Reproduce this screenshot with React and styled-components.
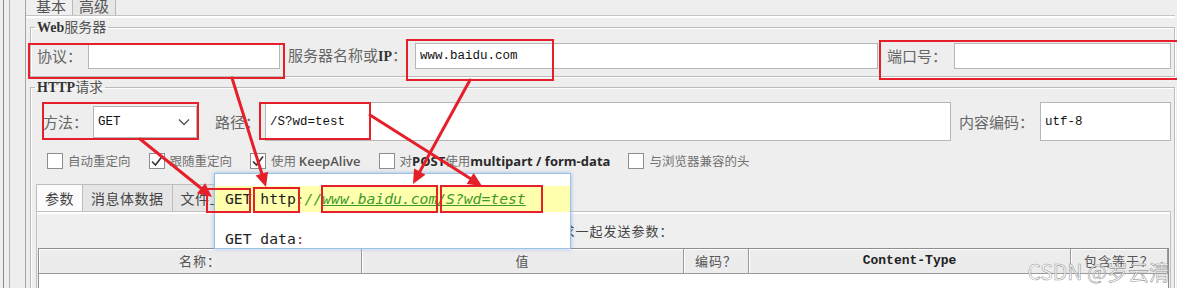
import React from "react";
import styled, { createGlobalStyle } from "styled-components";

const CJK = `"Noto Sans CJK SC", "Noto Sans", sans-serif`;
const MONO = `"Liberation Mono", "DejaVu Sans Mono", monospace`;
const CODE = `"DejaVu Sans Mono", "Liberation Mono", monospace`;
const SERIF = `"Liberation Serif", "DejaVu Serif", serif`;
const RED = "#e5202a";

const GlobalStyle = createGlobalStyle`
  html, body { margin: 0; padding: 0; background: #eeeeee; }
  body { font-family: ${CJK}; }
  *, *::before, *::after { box-sizing: border-box; }
`;

const Frame = styled.div`
  position: relative;
  width: 1177px;
  height: 288px;
  overflow: hidden;
  background: #eeeeee;
  display: flex;
`;

const Gutter = styled.div`
  flex: none;
  width: 26px;
  padding-left: 3px;
  border-right: 1px solid #a6a6a6;
  display: flex;
`;

const Rail = styled.div`
  width: 7px;
  border-left: 1px solid #8a8a8a;
  border-right: 1px solid #b0b0b0;
`;

const Main = styled.div`
  flex: 1;
  min-width: 0;
  display: flex;
  flex-direction: column;
  padding: 0 2px 0 4px;
`;

const TopTabs = styled.div`
  display: flex;
  height: 28px;
  margin-top: -7px;
`;

const TopTab = styled.div`
  padding: 4px 6px 0;
  font: 15px/18px ${CJK};
  color: #555;
  border-right: 1px solid #b9b9b9;
  background: ${(p) => (p.$active ? "#f0f0f0" : "#e7e7e7")};
`;

const TopPanel = styled.div`
  margin-left: -4px;
  padding: 3px 0 0 4px;
  border-top: 1px solid #c4c4c4;
  box-shadow: inset 0 2px 0 #ffffff;
  display: flex;
  flex-direction: column;
  gap: 2px;
`;

const Group = styled.fieldset`
  margin: 0;
  padding: 0;
  min-width: 0;
  border: 1px solid #bcbcbc;
  box-shadow: inset 1px 1px 0 #ffffff, 1px 1px 0 #ffffff;
`;

const GroupTitle = styled.legend`
  margin-left: 4px;
  padding: 0 2px;
  font: 14px/14px ${CJK};
  color: #555;
`;

const LatinBold = styled.span`
  font-family: ${SERIF};
  font-weight: 700;
  font-size: 14px;
  color: #333;
`;

const Row = styled.div`
  display: flex;
  align-items: center;
  height: ${(p) => p.$h}px;
  margin: ${(p) => p.$m};
`;

const Label = styled.span`
  flex: none;
  width: ${(p) => p.$w}px;
  margin-left: ${(p) => p.$ml || 0}px;
  font: 15px/20px ${CJK};
  color: #666;
  white-space: nowrap;
`;

const Field = styled.div`
  flex: ${(p) => (p.$w ? "none" : "1")};
  width: ${(p) => (p.$w ? `${p.$w}px` : "auto")};
  min-width: 0;
  height: ${(p) => p.$h}px;
  background: #ffffff;
  border: 1px solid #b6b6b6;
  padding: 0 4px;
  display: flex;
  align-items: center;
  justify-content: space-between;
  font: 12.5px ${MONO};
  color: #111;
  white-space: nowrap;
`;

const Chevron = styled.svg`
  flex: none;
  margin-right: 2px;
`;

const CheckItem = styled.div`
  display: flex;
  align-items: center;
  gap: 5px;
  margin-right: 18px;
`;

const Box = styled.div`
  flex: none;
  width: 16px;
  height: 16px;
  background: #ffffff;
  border: 1px solid #8e8e8e;
  display: flex;
  align-items: center;
  justify-content: center;
`;

const CheckText = styled.span`
  font: 12.5px/16px ${CJK};
  color: #707070;
  white-space: nowrap;
`;

const Sans = styled.span`
  font-family: "Open Sans", "Noto Sans", sans-serif;
  font-size: 13px;
  font-weight: ${(p) => (p.$bold ? 700 : 600)};
  color: ${(p) => (p.$bold ? "#2a2a2a" : "#555")};
`;

const LowerTabs = styled.div`
  display: flex;
  height: 27px;
  margin: 15px 0 0 5px;
`;

const LowerTab = styled.div`
  padding: 0 8px;
  margin-right: -1px;
  font: 14px/26px ${CJK};
  letter-spacing: 0.5px;
  color: #444;
  border: 1px solid #bdbdbd;
  border-bottom: none;
  background: ${(p) => (p.$active ? "#fbfbfb" : "#e5e5e5")};
`;

const Pane = styled.div`
  margin: 0 3px 0 5px;
  padding: 9px 1px 0;
  border: 1px solid #c2c2c2;
  border-bottom: none;
  box-shadow: inset 0 2px 0 #ffffff;
  background: #efefef;
`;

const PaneNote = styled.div`
  text-align: center;
  font: 13px/20px ${CJK};
  letter-spacing: 1px;
  color: #444;
`;

const Table = styled.div`
  margin-top: 7px;
  border: 1px solid #8e8e8e;
  background: #ffffff;
`;

const HeadRow = styled.div`
  display: grid;
  grid-template-columns: 323px 322px 65px 322px 1fr;
  height: 25px;
  background: #ececec;
  border-bottom: 1px solid #9a9a9a;
`;

const HeadCell = styled.div`
  display: flex;
  align-items: center;
  justify-content: center;
  border-right: 1px solid #9a9a9a;
  box-shadow: inset 1px 1px 0 #ffffff;
  font: 13px/16px ${(p) => (p.$mono ? MONO : CJK)};
  font-weight: ${(p) => (p.$mono ? 700 : 400)};
  color: ${(p) => (p.$mono ? "#222" : "#555")};
  letter-spacing: ${(p) => (p.$mono ? 0 : 1)}px;
`;

const TableBody = styled.div`
  height: 40px;
`;

const Popup = styled.div`
  position: absolute;
  left: 214px;
  top: 173px;
  width: 357px;
  height: 76px;
  background: #ffffff;
  border: 1px solid #9cc0e6;
  box-shadow: 0 0 4px rgba(80, 140, 220, 0.55);
  padding-top: 12px;
  overflow: hidden;
  font: 14.7px ${CODE};
  color: #222;
`;

const CodeLine = styled.div`
  height: ${(p) => p.$h}px;
  line-height: ${(p) => p.$h}px;
  padding-left: 10px;
  white-space: pre;
  background: ${(p) => (p.$hl ? "#ffffad" : "transparent")};
`;

const Sep = styled.span`
  color: #3b9a2c;
  font-style: italic;
`;

const Url = styled.span`
  color: #3b9a2c;
  font-style: italic;
  text-decoration: underline;
`;

const Colon = styled.span`
  color: #9c3a3a;
`;

const Overlay = styled.svg`
  position: absolute;
  left: 0;
  top: 0;
  pointer-events: none;
`;

const Watermark = styled.div`
  position: absolute;
  right: 7px;
  bottom: 3px;
  font: 21px/28px ${CJK};
  color: rgba(255, 255, 255, 0.8);
  -webkit-text-stroke: 0.6px rgba(120, 120, 120, 0.75);
  white-space: nowrap;
`;

function Check({ on }) {
  return (
    <Box>
      {on && (
        <svg width="14" height="14" viewBox="0 0 14 14">
          <path d="M2 7.5 L5.5 11 L12 2.5" fill="none" stroke="#333" strokeWidth="1.6" />
        </svg>
      )}
    </Box>
  );
}

function Arrow({ x1, y1, x2, y2 }) {
  const dx = x2 - x1;
  const dy = y2 - y1;
  const len = Math.hypot(dx, dy);
  const ux = dx / len;
  const uy = dy / len;
  const L = 14;
  const W = 6.5;
  const bx = x2 - ux * L;
  const by = y2 - uy * L;
  const pts = `${x2},${y2} ${bx - uy * W},${by + ux * W} ${bx + uy * W},${by - ux * W}`;
  return (
    <g>
      <line x1={x1} y1={y1} x2={bx + ux * 2} y2={by + uy * 2} stroke={RED} strokeWidth="3" strokeLinecap="round" />
      <polygon points={pts} fill={RED} />
    </g>
  );
}

const boxes = [
  [29, 44, 255, 34],
  [407, 40, 146, 40],
  [880, 41, 300, 38],
  [43, 103, 155, 36],
  [260, 103, 110, 36],
  [207, 189, 43, 23],
  [254, 188, 45, 24],
  [322, 186, 115, 26],
  [441, 186, 101, 26],
];

const arrows = [
  [232, 78, 266, 187],
  [470, 80, 413, 184],
  [140, 139, 212, 197],
  [370, 115, 482, 186],
];

export default function App() {
  return (
    <>
      <GlobalStyle />
      <Frame>
        <Gutter>
          <Rail />
        </Gutter>
        <Main>
          <TopTabs>
            <TopTab $active>基本</TopTab>
            <TopTab>高级</TopTab>
          </TopTabs>
          <TopPanel>
            <Group>
              <GroupTitle>
                <LatinBold>Web</LatinBold>服务器
              </GroupTitle>
              <Row $h={26} $m="8px 3px 7px 6px">
                <Label $w={51}>协议：</Label>
                <Field $w={192} $h={26} />
                <Label $w={127} $ml={8}>
                  服务器名称或<LatinBold>IP</LatinBold>：
                </Label>
                <Field $h={26}>www.baidu.com</Field>
                <Label $w={67} $ml={9}>端口号：</Label>
                <Field $w={217} $h={26} />
              </Row>
            </Group>
            <Group>
              <GroupTitle>
                <LatinBold>HTTP</LatinBold>请求
              </GroupTitle>
              <Row $h={39} $m="7px 3px 0 12px">
                <Label $w={50}>方法：</Label>
                <Field $w={104} $h={32}>
                  GET
                  <Chevron width="12" height="8" viewBox="0 0 12 8">
                    <path d="M1 1.5 L6 6.5 L11 1.5" fill="none" stroke="#555" strokeWidth="1.3" />
                  </Chevron>
                </Field>
                <Label $w={50} $ml={18}>路径：</Label>
                <Field $h={39}>/S?wd=test</Field>
                <Label $w={81} $ml={8}>内容编码：</Label>
                <Field $w={131} $h={39}>utf-8</Field>
              </Row>
              <Row $h={16} $m="12px 0 0 16px">
                <CheckItem>
                  <Check />
                  <CheckText>自动重定向</CheckText>
                </CheckItem>
                <CheckItem>
                  <Check on />
                  <CheckText>跟随重定向</CheckText>
                </CheckItem>
                <CheckItem>
                  <Check on />
                  <CheckText>
                    使用 <Sans>KeepAlive</Sans>
                  </CheckText>
                </CheckItem>
                <CheckItem>
                  <Check />
                  <CheckText>
                    对<Sans $bold>POST</Sans>使用<Sans $bold>multipart / form-data</Sans>
                  </CheckText>
                </CheckItem>
                <CheckItem>
                  <Check />
                  <CheckText>与浏览器兼容的头</CheckText>
                </CheckItem>
              </Row>
              <LowerTabs>
                <LowerTab $active>参数</LowerTab>
                <LowerTab>消息体数据</LowerTab>
                <LowerTab>文件上传</LowerTab>
              </LowerTabs>
              <Pane>
                <PaneNote>同请求一起发送参数：</PaneNote>
                <Table>
                  <HeadRow>
                    <HeadCell>名称：</HeadCell>
                    <HeadCell>值</HeadCell>
                    <HeadCell>编码？</HeadCell>
                    <HeadCell $mono>Content-Type</HeadCell>
                    <HeadCell>包含等于？</HeadCell>
                  </HeadRow>
                  <TableBody />
                </Table>
              </Pane>
            </Group>
          </TopPanel>
        </Main>

        <Popup>
          <CodeLine $h={26} $hl>
            GET http<Sep>://</Sep>
            <Url>www.baidu.com/S?wd=test</Url>
          </CodeLine>
          <CodeLine $h={17} />
          <CodeLine $h={20}>
            GET data<Colon>:</Colon>
          </CodeLine>
        </Popup>

        <Overlay width="1177" height="288" viewBox="0 0 1177 288">
          {boxes.map(([x, y, w, h], i) => (
            <rect key={i} x={x} y={y} width={w} height={h} fill="none" stroke={RED} strokeWidth="2" />
          ))}
          {arrows.map(([x1, y1, x2, y2], i) => (
            <Arrow key={i} x1={x1} y1={y1} x2={x2} y2={y2} />
          ))}
        </Overlay>

        <Watermark>CSDN @岁云清</Watermark>
      </Frame>
    </>
  );
}
